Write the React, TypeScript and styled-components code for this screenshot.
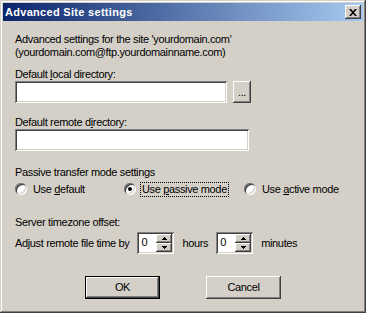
import React from 'react'
import styled, { createGlobalStyle } from 'styled-components'

const GlobalStyle = createGlobalStyle`
  html, body {
    margin: 0;
    padding: 0;
    background: #d4d0c8;
  }
  body {
    font-family: "Liberation Sans", Arial, sans-serif;
    font-size: 11px;
    letter-spacing: -0.35px;
    color: #000;
  }
`

const raised = `
  box-shadow: inset -1px -1px #404040, inset 1px 1px #ffffff,
    inset -2px -2px #808080, inset 2px 2px #d4d0c8;
`

const sunken = `
  box-shadow: inset 1px 1px #808080, inset -1px -1px #ffffff,
    inset 2px 2px #404040, inset -2px -2px #d4d0c8;
`

const Window = styled.div`
  width: 366px;
  height: 313px;
  box-sizing: border-box;
  padding: 3px;
  background: #d4d0c8;
  display: flex;
  flex-direction: column;
  box-shadow: inset -1px -1px #404040, inset 1px 1px #d4d0c8,
    inset -2px -2px #808080, inset 2px 2px #ffffff;
`

const TitleBar = styled.div`
  height: 18px;
  display: flex;
  align-items: center;
  justify-content: space-between;
  padding: 0 2px;
  background: linear-gradient(to right, #0a246a, #a6caf0);
`

const Title = styled.span`
  color: #fff;
  font-weight: bold;
  font-size: 11px;
  letter-spacing: 0.3px;
`

const CloseButton = styled.div`
  width: 16px;
  height: 14px;
  background: #d4d0c8;
  display: flex;
  align-items: center;
  justify-content: center;
  ${raised}
`

const Content = styled.div`
  display: flex;
  flex-direction: column;
  padding: 12px 0 0 12px;
`

const Text = styled.div<{ $top?: number }>`
  line-height: 13px;
  margin-top: ${p => p.$top ?? 0}px;
  white-space: nowrap;
`

const Row = styled.div<{ $top?: number; $height: number; $gap?: number }>`
  display: flex;
  align-items: center;
  height: ${p => p.$height}px;
  margin-top: ${p => p.$top ?? 0}px;
  gap: ${p => p.$gap ?? 0}px;
`

const Input = styled.div<{ $width: number }>`
  width: ${p => p.$width}px;
  height: 22px;
  background: #fff;
  ${sunken}
`

const Button = styled.div<{ $width: number; $height: number; $default?: boolean }>`
  width: ${p => p.$width}px;
  height: ${p => p.$height}px;
  box-sizing: border-box;
  display: flex;
  align-items: center;
  justify-content: center;
  background: #d4d0c8;
  line-height: 13px;
  ${p =>
    p.$default
      ? `border: 1px solid #000;
         box-shadow: inset -1px -1px #404040, inset 1px 1px #ffffff,
           inset -2px -2px #808080, inset 2px 2px #d4d0c8;`
      : raised}
`

const RadioOption = styled.div<{ $width: number }>`
  width: ${p => p.$width}px;
  display: flex;
  align-items: center;
  gap: 4px;
`

const RadioCircle = styled.span<{ $checked?: boolean }>`
  width: 12px;
  height: 12px;
  border-radius: 50%;
  box-sizing: border-box;
  background: #fff;
  display: flex;
  align-items: center;
  justify-content: center;
  box-shadow: inset 1px 1px #808080, inset -1px -1px #ffffff,
    inset 2px 2px #404040, inset -2px -2px #d4d0c8;
  &::after {
    content: '';
    width: 4px;
    height: 4px;
    border-radius: 50%;
    background: ${p => (p.$checked ? '#000' : 'transparent')};
  }
`

const RadioLabel = styled.span<{ $focused?: boolean }>`
  line-height: 13px;
  padding: 0 1px;
  border: 1px dotted ${p => (p.$focused ? '#000' : 'transparent')};
`

const Spinner = styled.div`
  width: 37px;
  height: 22px;
  box-sizing: border-box;
  padding: 2px;
  display: flex;
  background: #fff;
  ${sunken}
`

const SpinValue = styled.span`
  flex: 1;
  padding: 2px 0 0 2px;
  line-height: 13px;
`

const SpinButtons = styled.div`
  width: 16px;
  display: flex;
  flex-direction: column;
`

const SpinArrow = styled.div`
  flex: 1;
  display: flex;
  align-items: center;
  justify-content: center;
  background: #d4d0c8;
  ${raised}
`

const ButtonBar = styled.div`
  display: flex;
  justify-content: center;
  gap: 46px;
  margin-top: 22px;
  padding-right: 12px;
`

const Arrow = ({ up }: { up?: boolean }) => (
  <svg width="5" height="3" viewBox="0 0 5 3">
    <path d={up ? 'M2 0h1v1h1v1h1v1H0V2h1V1h1z' : 'M0 0h5v1H4v1H3v1H2V2H1V1H0z'} fill="#000" />
  </svg>
)

const SpinBox = ({ value }: { value: string }) => (
  <Spinner>
    <SpinValue>{value}</SpinValue>
    <SpinButtons>
      <SpinArrow><Arrow up /></SpinArrow>
      <SpinArrow><Arrow /></SpinArrow>
    </SpinButtons>
  </Spinner>
)

export default function App() {
  return (
    <>
      <GlobalStyle />
      <Window>
        <TitleBar>
          <Title>Advanced Site settings</Title>
          <CloseButton>
            <svg width="8" height="7" viewBox="0 0 8 7">
              <path d="M0 0h2l2 2.2L6 0h2L5 3.5 8 7H6L4 4.8 2 7H0l3-3.5z" fill="#000" />
            </svg>
          </CloseButton>
        </TitleBar>
        <Content>
          <Text>
            Advanced settings for the site 'yourdomain.com'
            <br />
            (yourdomain.com@ftp.yourdomainname.com)
          </Text>

          <Text $top={9}>Default <u>l</u>ocal directory:</Text>
          <Row $height={22} $gap={6}>
            <Input $width={212} />
            <Button $width={18} $height={22}>...</Button>
          </Row>

          <Text $top={13}>Default remote d<u>i</u>rectory:</Text>
          <Row $height={22}>
            <Input $width={234} />
          </Row>

          <Text $top={15}>Passive transfer mode settings</Text>
          <Row $top={2} $height={16}>
            <RadioOption $width={109}>
              <RadioCircle />
              <RadioLabel>Use <u>d</u>efault</RadioLabel>
            </RadioOption>
            <RadioOption $width={120}>
              <RadioCircle $checked />
              <RadioLabel $focused>Use <u>p</u>assive mode</RadioLabel>
            </RadioOption>
            <RadioOption $width={110}>
              <RadioCircle />
              <RadioLabel>Use <u>a</u>ctive mode</RadioLabel>
            </RadioOption>
          </Row>

          <Text $top={19}>Server timezone offset:</Text>
          <Row $top={3} $height={22} $gap={8}>
            <span>Adjust remote file time by</span>
            <SpinBox value="0" />
            <span>hours</span>
            <SpinBox value="0" />
            <span>minutes</span>
          </Row>

          <ButtonBar>
            <Button $width={75} $height={23} $default>OK</Button>
            <Button $width={75} $height={23}>Cancel</Button>
          </ButtonBar>
        </Content>
      </Window>
    </>
  )
}
